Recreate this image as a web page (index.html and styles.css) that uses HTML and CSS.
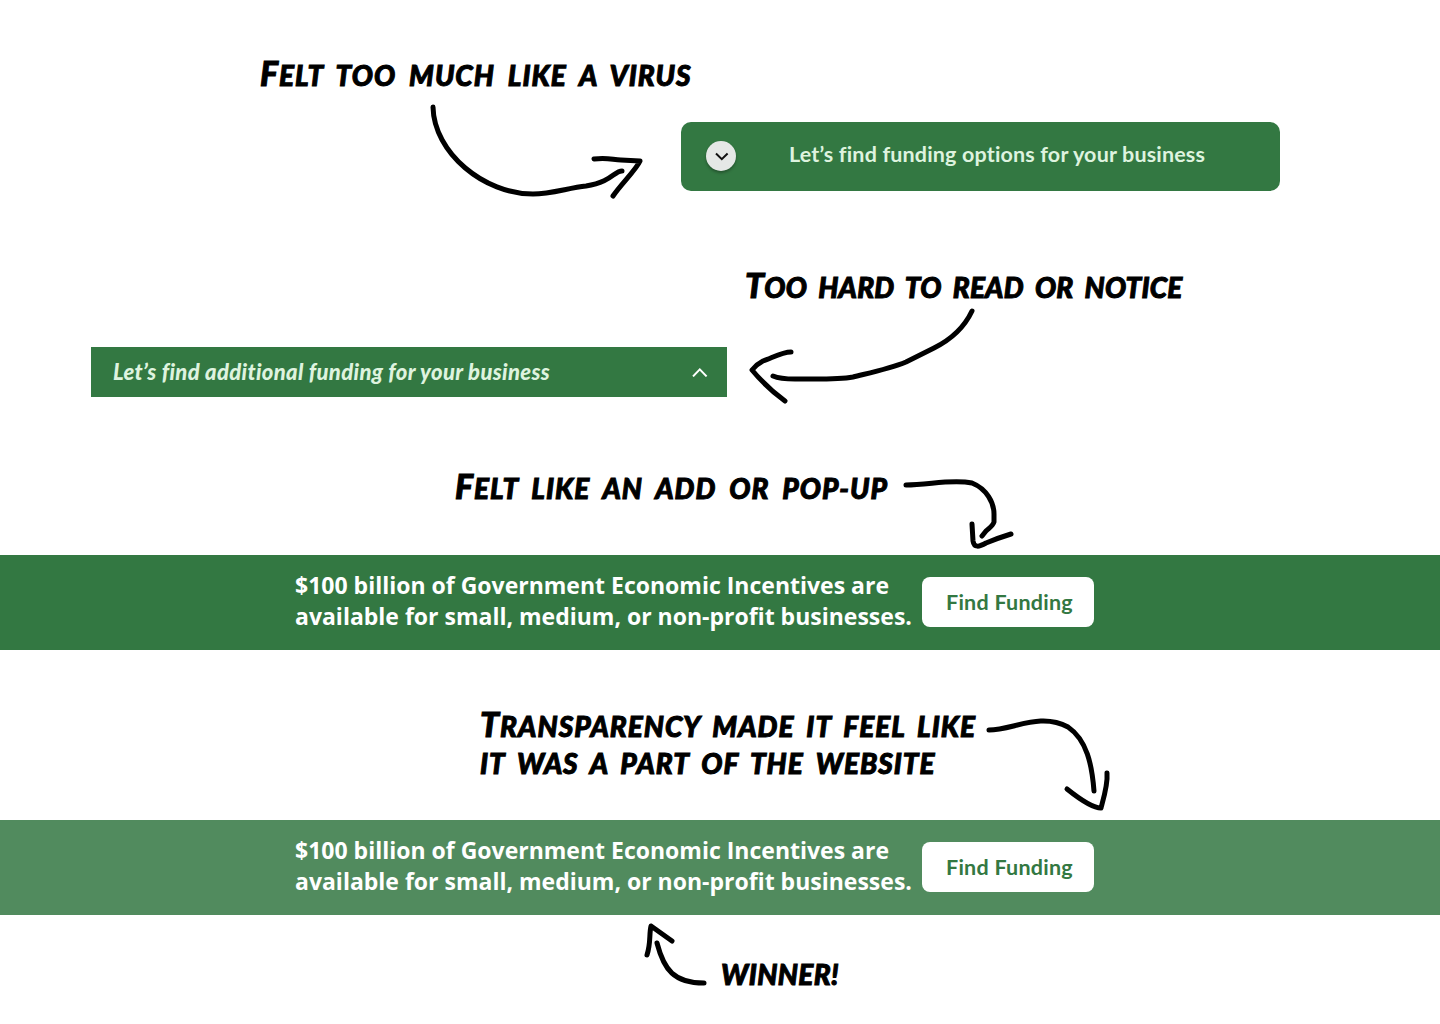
FILE: index.html
```html
<!DOCTYPE html>
<html lang="en">
<head>
    <meta charset="UTF-8">
    <meta name="viewport" content="width=device-width, initial-scale=1.0">
    <title>Funding banner iterations</title>
    <link rel="stylesheet" href="styles.css">
</head>
<body>

    <main class="board">

        <section class="concept concept-card">
            <p class="note capital">Felt too much like a virus</p>
            <div class="card">
                <button class="toggle" aria-label="Collapse">
                    <svg width="14" height="9" viewBox="0 0 14 9"><path d="M1 1.5 L6.8 7.2 L12.6 1.5"/></svg>
                </button>
                <span class="card-text">Let’s find funding options for your business</span>
            </div>
        </section>

        <section class="concept concept-strip">
            <p class="note capital">Too hard to read or notice</p>
            <div class="strip">
                <span class="strip-text">Let’s find additional funding for your business</span>
                <svg class="strip-icon" width="16" height="10" viewBox="0 0 16 10"><path d="M1 9.4 L7.8 2.4 L14.6 9.4"/></svg>
            </div>
        </section>

        <section class="concept concept-solid">
            <p class="note capital">Felt like an add or pop-up</p>
            <div class="banner">
                <p class="banner-text">$100 billion of Government Economic Incentives are<br>available for small, medium, or non-profit businesses.</p>
                <button class="find">Find Funding</button>
            </div>
        </section>

        <section class="concept concept-clear">
            <p class="note capital">Transparency made it feel like<br>it was a part of the website</p>
            <div class="banner banner-clear">
                <p class="banner-text">$100 billion of Government Economic Incentives are<br>available for small, medium, or non-profit businesses.</p>
                <button class="find">Find Funding</button>
            </div>
            <p class="note winner">winner!</p>
        </section>

        <!-- hand drawn arrows, on top of everything -->
        <svg class="arrows" width="1440" height="1024" viewBox="0 0 1440 1024">
            <path d="M433 107 C434 153 484 194 533 194 C551 194 568 188 586 186 C612 182 614 171 622 171"/>
            <path d="M594 159 C608 157 613 160 621 160 L640 161 C636 170 621 184 613 196"/>
            <path d="M972 311 C964 328 950 340 934 348 L906 362 C889 369 869 373 853 377 C837 380 810 379 795 379 Q780 379 773 376"/>
            <path d="M791 352 C782 352 772 358 763 361 Q757 364 752 370 Q766 387 785 401"/>
            <path d="M906 485 C929 485 951 479 972 483 C987 489 994 503 994 514 L994 522 C993 526 989 528 986 531 L982 536"/>
            <path d="M972 524 L973 541 C974 548 979 547 986 543 Q998 538 1011 534"/>
            <path d="M989 730 C1013 730 1040 712 1068 727 C1087 740 1092 765 1094 791"/>
            <path d="M1067 789 C1077 797 1093 808 1101 808 C1104 797 1108 784 1107 773"/>
            <path d="M704 983 C674 983 664 970 657 943"/>
            <path d="M647 955 C651 943 649 934 651 926 L672 941"/>
        </svg>

    </main>

</body>
</html>
```

FILE: styles.css
```css
* {
    box-sizing: border-box;
}
body {
    margin: 0;
    background: #fff;
    font-family: Lato, sans-serif;
}
.board {
    position: relative;
    width: 1440px;
    height: 1024px;
    padding-top: 57px;
    overflow: hidden;
}
.note {
    height: 37px;
    margin: 0;
    font-family: Lato, sans-serif;
    font-size: 28px;
    font-weight: 900;
    font-style: italic;
    text-transform: uppercase;
    line-height: 37px;
    letter-spacing: 1px;
    word-spacing: 6px;
    color: #000;
    white-space: nowrap;
    -webkit-text-stroke: 1px #000;
}
.capital::first-letter {
    font-size: 34px;
    line-height: 28px;
}
.card {
    display: flex;
    align-items: center;
    width: 599px;
    height: 69px;
    margin: 28px 0 0 681px;
    padding: 0 0 2px 25px;
    border-radius: 10px;
    background: #337842;
}
.toggle {
    display: flex;
    align-items: center;
    justify-content: center;
    width: 30px;
    height: 30px;
    padding: 1px 0 0 1px;
    border: none;
    border-radius: 50%;
    background: #e5e8e6;
    box-shadow: 0 2px 3px rgba(0, 0, 0, 0.3);
}
.toggle path {
    fill: none;
    stroke: #111;
    stroke-width: 2;
}
.card-text {
    margin-left: 53px;
    padding-bottom: 4px;
    font-size: 21.5px;
    font-weight: 700;
    letter-spacing: 0.16px;
    color: #def3df;
    white-space: nowrap;
}
.strip {
    display: flex;
    align-items: center;
    justify-content: space-between;
    width: 636px;
    height: 50px;
    margin: 41px 0 0 91px;
    padding: 0 19px 0 22px;
    background: #337842;
}
.strip-text {
    padding-bottom: 2px;
    font-size: 22px;
    font-weight: 900;
    font-style: italic;
    letter-spacing: 0.35px;
    color: #def3df;
    white-space: nowrap;
}
.strip-icon path {
    fill: none;
    stroke: #fff;
    stroke-width: 2;
}
.banner {
    display: flex;
    align-items: center;
    height: 95px;
    margin-top: 48px;
    padding: 0 0 2px 295px;
    background: #337842;
}
.banner-text {
    width: 627px;
    margin: 0;
    padding-bottom: 1px;
    font-family: "Open Sans", sans-serif;
    font-size: 23px;
    font-weight: 700;
    line-height: 31px;
    color: #fff;
    white-space: nowrap;
}
.find {
    width: 172px;
    height: 50px;
    padding: 0 0 0 3px;
    border: none;
    border-radius: 8px;
    background: #fff;
    font-family: Lato, sans-serif;
    font-size: 21.5px;
    font-weight: 700;
    letter-spacing: 0.25px;
    color: #337842;
}
.banner-clear {
    margin-top: 38px;
    background: #518b5e;
}
.concept-card .note {
    padding-left: 260px;
}
.concept-strip {
    margin-top: 78px;
}
.concept-strip .note {
    padding-left: 745px;
    letter-spacing: 0.2px;
    word-spacing: 5px;
}
.concept-solid {
    margin-top: 73px;
}
.concept-solid .note {
    padding-left: 455px;
}
.concept-clear {
    margin-top: 58px;
}
.concept-clear .note {
    height: 74px;
    padding-left: 480px;
    word-spacing: 5px;
}
.concept-clear .winner {
    height: 37px;
    margin-top: 41px;
    padding-left: 721px;
    letter-spacing: 0.4px;
}
.arrows {
    position: absolute;
    top: 0;
    left: 0;
    pointer-events: none;
}
.arrows path {
    fill: none;
    stroke: #000;
    stroke-width: 5;
    stroke-linecap: round;
    stroke-linejoin: round;
}
```
